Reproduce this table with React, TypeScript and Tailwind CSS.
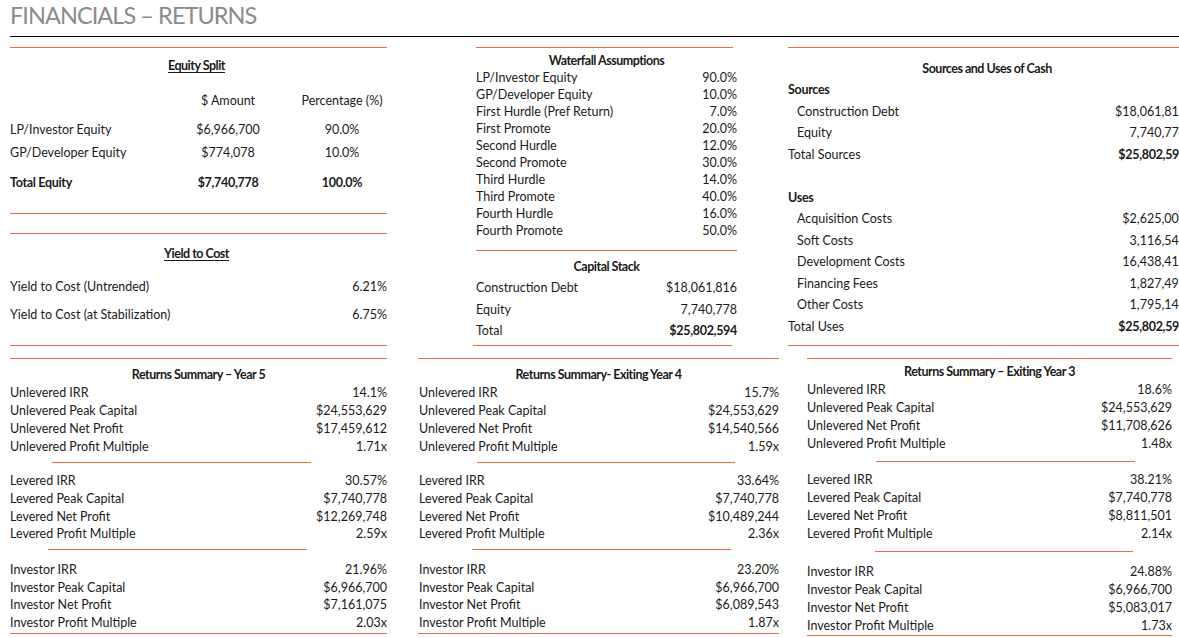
import React from "react";

type Pair = [string, string];

const waterfall: Pair[] = [
  ["LP/Investor Equity", "90.0%"],
  ["GP/Developer Equity", "10.0%"],
  ["First Hurdle (Pref Return)", "7.0%"],
  ["First Promote", "20.0%"],
  ["Second Hurdle", "12.0%"],
  ["Second Promote", "30.0%"],
  ["Third Hurdle", "14.0%"],
  ["Third Promote", "40.0%"],
  ["Fourth Hurdle", "16.0%"],
  ["Fourth Promote", "50.0%"],
];

const summaries = [
  {
    title: "Returns Summary – Year 5",
    unlevered: ["14.1%", "$24,553,629", "$17,459,612", "1.71x"],
    levered: ["30.57%", "$7,740,778", "$12,269,748", "2.59x"],
    investor: ["21.96%", "$6,966,700", "$7,161,075", "2.03x"],
  },
  {
    title: "Returns Summary- Exiting Year 4",
    unlevered: ["15.7%", "$24,553,629", "$14,540,566", "1.59x"],
    levered: ["33.64%", "$7,740,778", "$10,489,244", "2.36x"],
    investor: ["23.20%", "$6,966,700", "$6,089,543", "1.87x"],
  },
  {
    title: "Returns Summary – Exiting Year 3",
    unlevered: ["18.6%", "$24,553,629", "$11,708,626", "1.48x"],
    levered: ["38.21%", "$7,740,778", "$8,811,501", "2.14x"],
    investor: ["24.88%", "$6,966,700", "$5,083,017", "1.73x"],
  },
];

const Line = ({ className = "" }: { className?: string }) => (
  <div className={`h-px bg-[#f26b3a] ${className}`} />
);

const Row = ({
  label,
  value,
  h = "h-[17px]",
  bold = false,
  boldValue = false,
  className = "",
}: {
  label: string;
  value: string;
  h?: string;
  bold?: boolean;
  boldValue?: boolean;
  className?: string;
}) => (
  <div className={`flex items-center justify-between ${h} ${className}`}>
    <span className={bold ? "font-bold tracking-tight" : ""}>{label}</span>
    <span className={boldValue ? "font-bold tracking-tight" : ""}>{value}</span>
  </div>
);

const Title = ({ children, underline = false, className = "" }: { children: React.ReactNode; underline?: boolean; className?: string }) => (
  <div className={`flex h-[18px] items-center justify-center font-bold tracking-[-0.04em] ${underline ? "underline underline-offset-2" : ""} ${className}`}>
    {children}
  </div>
);

const Group = ({
  prefix,
  values,
  h,
}: {
  prefix: string;
  values: string[];
  h: string;
}) => {
  const labels = ["IRR", "Peak Capital", "Net Profit", "Profit Multiple"];
  return (
    <div>
      {labels.map((l, i) => (
        <Row key={l} label={`${prefix} ${l}`} value={values[i]} h={h} />
      ))}
    </div>
  );
};

export default function App() {
  const s = summaries;
  return (
    <div
      className="h-[638px] w-[1179px] overflow-hidden bg-white text-[12.5px] text-[#1a1a1a]"
      style={{ fontFamily: "Lato, 'Liberation Sans', sans-serif" }}
    >
      <div className="pl-[10px] text-[23.5px] leading-[30px] tracking-[-0.04em] text-[#8b8b8b]">FINANCIALS – RETURNS</div>
      <div className="ml-[10px] mt-[6px] h-px bg-black" />

      {/* top band */}
      <div className="mt-[10px] flex pl-[10px]">
        <div className="w-[377px] shrink-0">
          <Line />
          <Title underline className="mt-[9px] pr-[4px]">Equity Split</Title>
          <div className="mt-[17px] flex h-[18px] items-center">
            <span className="w-[168px]" />
            <span className="w-[100px] text-center">$ Amount</span>
            <span className="ml-[19px] w-[90px] text-center">Percentage (%)</span>
          </div>
          <div className="mt-[11px] flex h-[18px] items-center">
            <span className="w-[168px]">LP/Investor Equity</span>
            <span className="w-[100px] text-center">$6,966,700</span>
            <span className="ml-[19px] w-[90px] text-center">90.0%</span>
          </div>
          <div className="mt-[5px] flex h-[18px] items-center">
            <span className="w-[168px]">GP/Developer Equity</span>
            <span className="w-[100px] text-center">$774,078</span>
            <span className="ml-[19px] w-[90px] text-center">10.0%</span>
          </div>
          <div className="mt-[12px] flex h-[18px] items-center font-bold tracking-tight">
            <span className="w-[168px]">Total Equity</span>
            <span className="w-[100px] text-center">$7,740,778</span>
            <span className="ml-[19px] w-[90px] text-center">100.0%</span>
          </div>
          <Line className="mt-[21px]" />
          <Line className="mt-[19px]" />
          <Title underline className="mt-[11px] pr-[4px]">Yield to Cost</Title>
          <Row label="Yield to Cost (Untrended)" value="6.21%" h="h-[18px]" className="mt-[15px]" />
          <Row label="Yield to Cost (at Stabilization)" value="6.75%" h="h-[18px]" className="mt-[10px]" />
          <Line className="mt-[21px]" />
        </div>

        <div className="ml-[89px] w-[261px] shrink-0">
          <Line className="w-[257px]" />
          <Title className="mt-[4px]">Waterfall Assumptions</Title>
          <div>
            {waterfall.map(([l, v]) => (
              <Row key={l} label={l} value={v} />
            ))}
          </div>
          <Line className="mt-[10px]" />
          <Title className="mt-[7px]">Capital Stack</Title>
          <Row label="Construction Debt" value="$18,061,816" h="h-[18px]" className="mt-[3px]" />
          <Row label="Equity" value="7,740,778" h="h-[18px]" className="mt-[4px]" />
          <Row label="Total" value="$25,802,594" h="h-[18px]" boldValue className="mt-[3px]" />
          <Line className="-ml-[3px] mt-[5px] w-[259px]" />
        </div>

        <div className="ml-[51px] w-[398px] shrink-0">
          <Line className="bg-[#f5a283]" />
          <Title className="mt-[12px]">Sources and Uses of Cash</Title>
          <div className="mt-[2px]">
            <Row label="Sources" value="" h="h-[21.5px]" bold />
            <Row label="Construction Debt" value="$18,061,816" h="h-[21.5px]" className="pl-[9px]" />
            <Row label="Equity" value="7,740,778" h="h-[21.5px]" className="pl-[9px]" />
            <Row label="Total Sources" value="$25,802,594" h="h-[21.5px]" boldValue />
            <div className="h-[21.5px]" />
            <Row label="Uses" value="" h="h-[21.5px]" bold />
            <Row label="Acquisition Costs" value="$2,625,000" h="h-[21.5px]" className="pl-[9px]" />
            <Row label="Soft Costs" value="3,116,545" h="h-[21.5px]" className="pl-[9px]" />
            <Row label="Development Costs" value="16,438,411" h="h-[21.5px]" className="pl-[9px]" />
            <Row label="Financing Fees" value="1,827,495" h="h-[21.5px]" className="pl-[9px]" />
            <Row label="Other Costs" value="1,795,143" h="h-[21.5px]" className="pl-[9px]" />
            <Row label="Total Uses" value="$25,802,594" h="h-[21.5px]" boldValue />
          </div>
          <Line className="mt-[7px]" />
        </div>
      </div>

      {/* returns summaries */}
      <div className="mt-[12px] flex pl-[10px]">
        <div className="w-[377px] shrink-0">
          <Line />
          <Title className="mt-[7px]">{s[0].title}</Title>
          <div className="mt-[1px]">
            <Group prefix="Unlevered" values={s[0].unlevered} h="h-[17.7px]" />
          </div>
          <Line className="ml-[42px] mt-[6px] w-[259px] bg-[#f5a080]" />
          <div className="mt-[10px]">
            <Group prefix="Levered" values={s[0].levered} h="h-[17.7px]" />
          </div>
          <Line className="ml-[38px] mt-[5px] w-[259px]" />
          <div className="mt-[12px]">
            <Group prefix="Investor" values={s[0].investor} h="h-[17.7px]" />
          </div>
          <Line className="mt-[1px]" />
        </div>

        <div className="ml-[31px] w-[361px] shrink-0">
          <Line />
          <Title className="mt-[7px]">{s[1].title}</Title>
          <div className="mt-[1px] pl-[1px]">
            <Group prefix="Unlevered" values={s[1].unlevered} h="h-[17.7px]" />
            <Line className="ml-[58px] mt-[6px] w-[258px] bg-[#f5a080]" />
            <div className="mt-[10px]">
              <Group prefix="Levered" values={s[1].levered} h="h-[17.7px]" />
            </div>
            <Line className="ml-[53px] mt-[5px] w-[259px]" />
            <div className="mt-[12px]">
              <Group prefix="Investor" values={s[1].investor} h="h-[17.7px]" />
            </div>
          </div>
          <Line className="mt-[1px]" />
        </div>

        <div className="ml-[28px] w-[365px] shrink-0">
          <Line className="bg-[#f5a283]" />
          <Title className="mt-[4px]">{s[2].title}</Title>
          <Group prefix="Unlevered" values={s[2].unlevered} h="h-[18px]" />
          <Line className="ml-[69px] mt-[8px] w-[259px] bg-[#f5a080]" />
          <div className="mt-[9px]">
            <Group prefix="Levered" values={s[2].levered} h="h-[18px]" />
          </div>
          <Line className="ml-[68px] mt-[8px] w-[258px]" />
          <div className="mt-[11px]">
            <Group prefix="Investor" values={s[2].investor} h="h-[18px]" />
          </div>
          <Line className="mt-[0px]" />
        </div>
      </div>
    </div>
  );
}
